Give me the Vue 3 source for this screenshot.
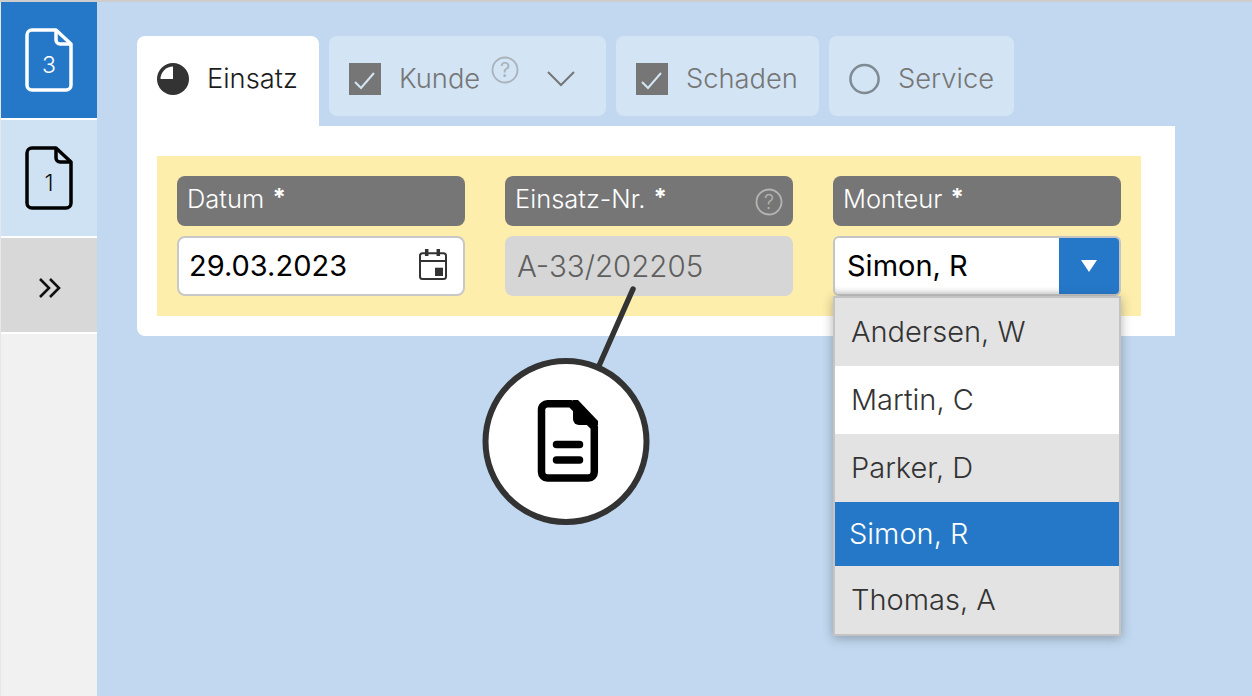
<script setup>
const options = [
  { name: 'Andersen, W', cls: 'grey' },
  { name: 'Martin, C', cls: 'white' },
  { name: 'Parker, D', cls: 'grey' },
  { name: 'Simon, R', cls: 'sel' },
  { name: 'Thomas, A', cls: 'grey' },
]
</script>

<template>
  <div class="page">
    <aside class="side">
      <div class="s-item s-active">
        <svg class="doc" viewBox="0 0 48 64" width="48" height="64" fill="none" stroke="#fff" stroke-width="3.5" stroke-linejoin="round">
          <path d="M7 2h24l15 14v41a5 5 0 0 1-5 5H7a5 5 0 0 1-5-5V7a5 5 0 0 1 5-5z" />
          <path d="M31 2v10a4 4 0 0 0 4 4h11" />
        </svg>
        <span class="doc-n">3</span>
      </div>
      <div class="s-item s-second">
        <svg class="doc" viewBox="0 0 48 64" width="48" height="64" fill="none" stroke="#000" stroke-width="3.5" stroke-linejoin="round">
          <path d="M7 2h24l15 14v41a5 5 0 0 1-5 5H7a5 5 0 0 1-5-5V7a5 5 0 0 1 5-5z" />
          <path d="M31 2v10a4 4 0 0 0 4 4h11" />
        </svg>
        <span class="doc-n dark">1</span>
      </div>
      <div class="s-item s-more">
        <svg viewBox="0 0 24 22" width="24" height="22" fill="none" stroke="#111" stroke-width="2.6">
          <path d="M2 2l9 9-9 9M12 2l9 9-9 9" />
        </svg>
      </div>
      <div class="s-rest"></div>
    </aside>

    <main class="main">
      <nav class="tabs">
        <div class="tab tab-active t1">
          <svg width="32" height="32" viewBox="0 0 32 32"><circle cx="16" cy="16" r="16" fill="#333" /><path d="M16 3.5A12.5 12.5 0 0 0 3.500 16H16z" fill="#fff" /></svg>
          <span class="t-label active-label">Einsatz</span>
        </div>
        <div class="tab t2">
          <svg class="chk" width="32" height="32" viewBox="0 0 32 32"><rect width="32" height="32" fill="#767676" /><path d="M6 19l6 6L25 10" fill="none" stroke="#d4e5f4" stroke-width="2" /></svg>
          <span class="t-label">Kunde</span>
          <svg class="q-top" width="28" height="28" viewBox="0 0 28 28"><circle cx="14" cy="14" r="12.500" fill="none" stroke="#aab2ba" stroke-width="1.800" /><text x="14" y="21" text-anchor="middle" class="q-t" fill="#aab2ba">?</text></svg>
          <svg class="chev" width="30" height="18" viewBox="0 0 30 18"><path d="M2 2l13 13L28 2" fill="none" stroke="#767676" stroke-width="2" /></svg>
        </div>
        <div class="tab t3">
          <svg class="chk" width="32" height="32" viewBox="0 0 32 32"><rect width="32" height="32" fill="#767676" /><path d="M6 19l6 6L25 10" fill="none" stroke="#d4e5f4" stroke-width="2" /></svg>
          <span class="t-label">Schaden</span>
        </div>
        <div class="tab t4">
          <svg class="chk" width="32" height="32" viewBox="0 0 32 32"><circle cx="16" cy="16" r="14.500" fill="none" stroke="#7f8a93" stroke-width="2.600" /></svg>
          <span class="t-label">Service</span>
        </div>
      </nav>

      <section class="panel">
        <div class="yellow">
          <div class="col">
            <div class="label">Datum <b class="star">*</b></div>
            <div class="input date">
              <span>29.03.2023</span>
              <svg class="cal" width="30" height="30" viewBox="0 0 30 30" fill="none" stroke="#333" stroke-width="2">
                <rect x="2" y="2.300" width="26" height="25.700" rx="2.500" />
                <path d="M2 10h26" />
                <path d="M8.700 -2v7M20.300 -2v7" stroke-width="3.500" />
                <rect x="17" y="16.700" width="8" height="8.300" fill="#333" stroke="none" />
              </svg>
            </div>
          </div>
          <div class="col">
            <div class="label">Einsatz-Nr. <b class="star">*</b>
              <svg class="q-lab" width="28" height="28" viewBox="0 0 28 28"><circle cx="14" cy="14" r="12.500" fill="none" stroke="#b4b4b4" stroke-width="1.800" /><text x="14" y="21" text-anchor="middle" class="q-t" fill="#b4b4b4">?</text></svg>
            </div>
            <div class="input readonly">A-33/202205</div>
          </div>
          <div class="col select-col">
            <div class="label">Monteur <b class="star">*</b></div>
            <div class="select">
              <span class="sel-val">Simon, R</span>
              <span class="sel-btn"><i class="tri"></i></span>
            </div>
            <ul class="menu">
              <li v-for="o in options" :key="o.name" :class="o.cls">{{ o.name }}</li>
            </ul>
          </div>
        </div>
      </section>

      <div class="callout">
        <svg width="172" height="240" viewBox="0 0 172 240">
          <path d="M151 3L116 82" stroke="#333" stroke-width="5.500" stroke-linecap="round" fill="none" />
          <circle cx="84" cy="155.500" r="80.500" fill="#fff" stroke="#333" stroke-width="6" />
          <path d="M66 117.800h23L112.300 141V186a6 6 0 0 1-6 6H65.500a6 6 0 0 1-6-6V124a6 6 0 0 1 6.500-6.200z" fill="none" stroke="#000" stroke-width="7.500" stroke-linejoin="round" />
          <path d="M91 114h5l20 21v4H97a6 6 0 0 1-6-6z" fill="#000" />
          <path d="M74.500 158.500h23M74.500 174h23" stroke="#000" stroke-width="7.500" stroke-linecap="round" />
        </svg>
      </div>
    </main>
  </div>
</template>

<style scoped>
.page {
  width: 1252px;
  height: 696px;
  display: flex;
  background: #c1d8f0;
  border-top: 2px solid #cdcdcd;
  box-sizing: border-box;
  overflow: hidden;
  font-family: Inter, "Liberation Sans", sans-serif;
}
.side {
  width: 97px;
  flex: none;
  display: flex;
  flex-direction: column;
  border-left: 1px solid #e4e8ec;
  box-sizing: border-box;
  background: #f1f1f1;
}
.s-item {
  position: relative;
  display: flex;
  align-items: center;
  justify-content: center;
  border-bottom: 2px solid #fff;
  box-sizing: border-box;
}
.s-active { height: 118px; background: #2578c8; }
.s-second { height: 118px; background: #cfe2f3; }
.s-more { height: 96px; padding-top: 6px; padding-left: 1px; background: #d8d8d8; }
.s-rest { flex: 1; background: #f1f1f1; }
.doc-n {
  position: absolute;
  left: 0;
  right: 0;
  top: 51px;
  text-align: center;
  font-size: 23px;
  font-weight: 300;
  line-height: 24px;
  color: #fff;
}
.doc-n.dark { color: #111; }
.main {
  position: relative;
  flex: 1;
  padding: 34px 0 0 40px;
}
.tabs {
  display: flex;
  gap: 10px;
  align-items: flex-start;
}
.tab {
  height: 80px;
  display: flex;
  align-items: center;
  padding: 6px 20px 0;
  box-sizing: border-box;
  border-radius: 8px;
  background: #d3e4f4;
  color: #767676;
}
.tab-active {
  height: 90px;
  padding-bottom: 10px;
  background: #fff;
  border-radius: 8px 8px 0 0;
}
.t1 { width: 182px; }
.t2 { width: 277px; position: relative; }
.t3 { width: 203px; }
.t4 { width: 185px; }
.t-label {
  font-size: 27.300px;
  font-weight: 300;
  line-height: 32px;
  margin-left: 18px;
}
.active-label { color: #1c1c1c; }
.q-top {
  position: absolute;
  left: 162px;
  top: 20px;
}
.q-t {
  font-size: 20px;
  font-family: Inter, "Liberation Sans", sans-serif;
}
.chev {
  position: absolute;
  left: 217px;
  top: 34px;
}
.panel {
  width: 1038px;
  height: 210px;
  background: #fff;
  border-radius: 0 0 0 8px;
  padding: 30px 34px 20px 20px;
  box-sizing: border-box;
}
.yellow {
  height: 160px;
  background: #feeeab;
  padding: 20px;
  box-sizing: border-box;
  display: flex;
  gap: 40px;
}
.col {
  width: 288px;
  display: flex;
  flex-direction: column;
  gap: 10px;
  position: relative;
}
.label {
  position: relative;
  height: 50px;
  border-radius: 8px;
  background: #767676;
  color: #fff;
  font-size: 25.500px;
  font-weight: 300;
  line-height: 46px;
  padding-left: 10px;
  box-sizing: border-box;
  flex: none;
}
.star {
  font-weight: 700;
  font-size: 24px;
  margin-left: 1px;
  vertical-align: 2px;
  line-height: 1;
}
.q-lab {
  position: absolute;
  right: 10px;
  top: 12px;
}
.input {
  height: 60px;
  border-radius: 8px;
  box-sizing: border-box;
  display: flex;
  align-items: center;
  font-size: 29.500px;
  font-weight: 300;
  padding: 0 12px;
}
.date {
  background: #fff;
  border: 2px solid #c8c8c8;
  color: #000;
  font-size: 29px;
  font-weight: 400;
  padding: 0 15px 0 10px;
  justify-content: space-between;
}
.date span { position: relative; top: -1px; }
.cal { overflow: visible; }
.readonly {
  background: #d6d6d6;
  color: #5f5f5f;
}
.select {
  height: 60px;
  box-sizing: border-box;
  border: 2px solid #c4c4c4;
  border-radius: 6px;
  display: flex;
  overflow: hidden;
  background: #fff;
  box-shadow: inset 0 -6px 6px -5px rgba(0, 0, 0, 0.2);
}
.sel-val {
  flex: 1;
  font-size: 29px;
  line-height: 56px;
  padding-left: 12px;
  color: #000;
}
.sel-btn {
  width: 60px;
  background: #2578c8;
  display: flex;
  align-items: center;
  justify-content: center;
}
.tri {
  width: 0;
  height: 0;
  border-left: 8px solid transparent;
  border-right: 8px solid transparent;
  border-top: 12px solid #fff;
}
.menu {
  position: absolute;
  left: 0;
  top: 120px;
  width: 288px;
  height: 340px;
  margin: 0;
  padding: 0;
  list-style: none;
  box-sizing: border-box;
  border: 2px solid #c4c4c4;
  box-shadow: 0 2px 10px rgba(60, 60, 60, 0.4);
  background: #e3e3e3;
  font-size: 29px;
  font-weight: 300;
  color: #333;
  z-index: 3;
}
.menu li {
  height: 68px;
  line-height: 68px;
  padding-left: 16px;
}
.menu li.grey { background: #e3e3e3; }
.menu li.white { background: #fff; }
.menu li.sel {
  height: 64px;
  line-height: 64px;
  padding-left: 14px;
  background: #2578c8;
  color: #fff;
}
.callout {
  position: absolute;
  left: 385px;
  top: 284px;
  line-height: 0;
}
</style>
